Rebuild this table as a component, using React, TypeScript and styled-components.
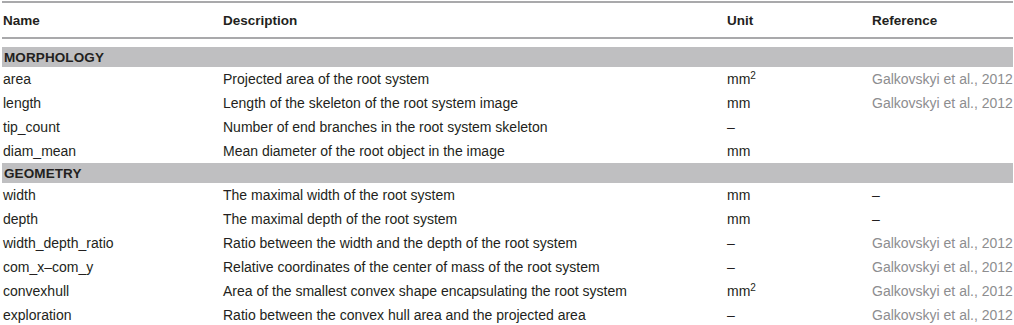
import React from "react";
import styled, { createGlobalStyle } from "styled-components";

const Global = createGlobalStyle`
  html, body { margin: 0; padding: 0; background: #ffffff; }
  body { font-family: "Liberation Sans", Arial, sans-serif; color: #231f20; }
`;

const Table = styled.div`
  width: 1011px;
  margin-left: 2px;
  padding-top: 1px;
  font-size: 14px;
`;

const cols = "220px 504px 145px 1fr";

const HeaderRow = styled.div`
  display: grid;
  grid-template-columns: ${cols};
  align-items: center;
  height: 34px;
  border-top: 2px solid #a9a9ab;
  border-bottom: 2px solid #a9a9ab;
  font-weight: bold;
  font-size: 13.5px;
  padding-left: 1px;
  margin-bottom: 8px;
`;

const Band = styled.div`
  height: 20px;
  background: #bfbfc1;
  display: flex;
  align-items: center;
  padding-left: 2px;
  font-weight: bold;
  font-size: 13.5px;
  letter-spacing: 0.1px;
`;

const Row = styled.div`
  display: grid;
  grid-template-columns: ${cols};
  align-items: center;
  height: 24px;
  padding-left: 1px;
`;

const Cell = styled.div<{ $muted?: boolean }>`
  white-space: nowrap;
  color: ${(p) => (p.$muted ? "#8d8d8f" : "#231f20")};
`;

const Sup = styled.sup`
  font-size: 10px;
  vertical-align: 5px;
  line-height: 0;
`;

type R = { name: string; desc: string; unit: string; ref: string };

const G = "Galkovskyi et al., 2012";

const groups: { title: string; rows: R[] }[] = [
  {
    title: "MORPHOLOGY",
    rows: [
      { name: "area", desc: "Projected area of the root system", unit: "mm2", ref: G },
      { name: "length", desc: "Length of the skeleton of the root system image", unit: "mm", ref: G },
      { name: "tip_count", desc: "Number of end branches in the root system skeleton", unit: "–", ref: "" },
      { name: "diam_mean", desc: "Mean diameter of the root object in the image", unit: "mm", ref: "" },
    ],
  },
  {
    title: "GEOMETRY",
    rows: [
      { name: "width", desc: "The maximal width of the root system", unit: "mm", ref: "–" },
      { name: "depth", desc: "The maximal depth of the root system", unit: "mm", ref: "–" },
      { name: "width_depth_ratio", desc: "Ratio between the width and the depth of the root system", unit: "–", ref: G },
      { name: "com_x–com_y", desc: "Relative coordinates of the center of mass of the root system", unit: "–", ref: G },
      { name: "convexhull", desc: "Area of the smallest convex shape encapsulating the root system", unit: "mm2", ref: G },
      { name: "exploration", desc: "Ratio between the convex hull area and the projected area", unit: "–", ref: G },
    ],
  },
];

const Unit = ({ u }: { u: string }) =>
  u === "mm2" ? (
    <>
      mm<Sup>2</Sup>
    </>
  ) : (
    <>{u}</>
  );

export default function App() {
  return (
    <>
      <Global />
      <Table>
        <HeaderRow>
          <Cell>Name</Cell>
          <Cell>Description</Cell>
          <Cell>Unit</Cell>
          <Cell>Reference</Cell>
        </HeaderRow>
        {groups.map((g) => (
          <React.Fragment key={g.title}>
            <Band>{g.title}</Band>
            {g.rows.map((r) => (
              <Row key={r.name}>
                <Cell>{r.name}</Cell>
                <Cell>{r.desc}</Cell>
                <Cell>
                  <Unit u={r.unit} />
                </Cell>
                <Cell $muted={r.ref !== "–"}>{r.ref}</Cell>
              </Row>
            ))}
          </React.Fragment>
        ))}
      </Table>
    </>
  );
}
